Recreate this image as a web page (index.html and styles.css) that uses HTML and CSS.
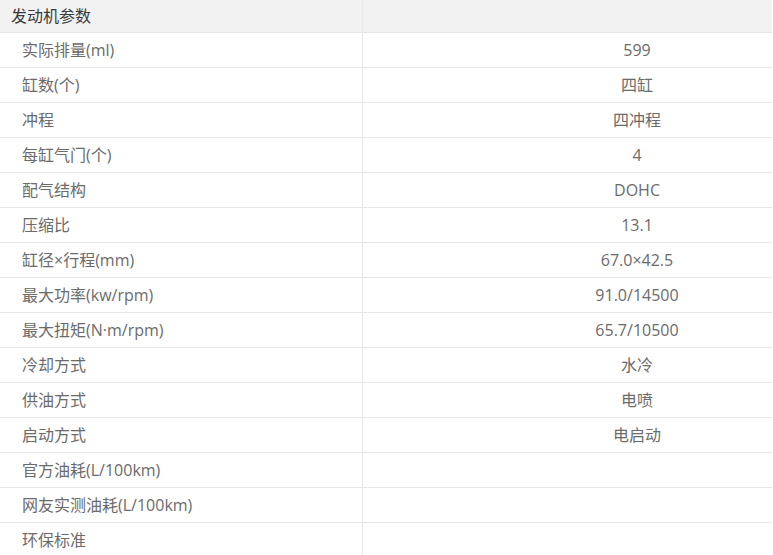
FILE: index.html
```html
<!DOCTYPE html>
<html lang="zh-CN">
<head>
<meta charset="utf-8">
<link rel="stylesheet" href="styles.css">
</head>
<body>
<div class="wrap">
<table class="spec">
  <thead>
    <tr><th class="k">发动机参数</th><th class="v"></th></tr>
  </thead>
  <tbody>
    <tr><td class="k">实际排量(ml)</td><td class="v">599</td></tr>
    <tr><td class="k">缸数(个)</td><td class="v">四缸</td></tr>
    <tr><td class="k">冲程</td><td class="v">四冲程</td></tr>
    <tr><td class="k">每缸气门(个)</td><td class="v">4</td></tr>
    <tr><td class="k">配气结构</td><td class="v">DOHC</td></tr>
    <tr><td class="k">压缩比</td><td class="v">13.1</td></tr>
    <tr><td class="k">缸径×行程(mm)</td><td class="v">67.0×42.5</td></tr>
    <tr><td class="k">最大功率(kw/rpm)</td><td class="v">91.0/14500</td></tr>
    <tr><td class="k">最大扭矩(N·m/rpm)</td><td class="v">65.7/10500</td></tr>
    <tr><td class="k">冷却方式</td><td class="v">水冷</td></tr>
    <tr><td class="k">供油方式</td><td class="v">电喷</td></tr>
    <tr><td class="k">启动方式</td><td class="v">电启动</td></tr>
    <tr><td class="k">官方油耗(L/100km)</td><td class="v"></td></tr>
    <tr><td class="k">网友实测油耗(L/100km)</td><td class="v"></td></tr>
    <tr><td class="k">环保标准</td><td class="v"></td></tr>
  </tbody>
</table>
</div>
</body>
</html>
```

FILE: styles.css
```css
html, body {
  margin: 0;
  padding: 0;
  overflow: hidden;
  background: #fff;
}
.wrap {
  width: 772px;
  overflow: hidden;
}
.spec {
  width: 912px;
  border-collapse: collapse;
  table-layout: fixed;
  font-family: "Open Sans", "Noto Sans CJK SC", sans-serif;
  font-size: 16px;
  line-height: 20px;
}
.spec th {
  height: 31px;
  padding: 0 0 1px;
  background: #f2f2f2;
  font-weight: normal;
  color: #3a3a3a;
  text-align: left;
  border-right: 1px solid #ebebeb;
}
.spec th.k {
  width: 362px;
  padding-left: 11px;
  box-sizing: border-box;
}
.spec td {
  height: 33px;
  padding: 0 0 1px;
  border-top: 1px solid #e6e6e6;
  color: #6b6b6b;
}
.spec td.k {
  padding-left: 22px;
  border-right: 1px solid #e6e6e6;
}
.spec td.v {
  text-align: center;
}
```
